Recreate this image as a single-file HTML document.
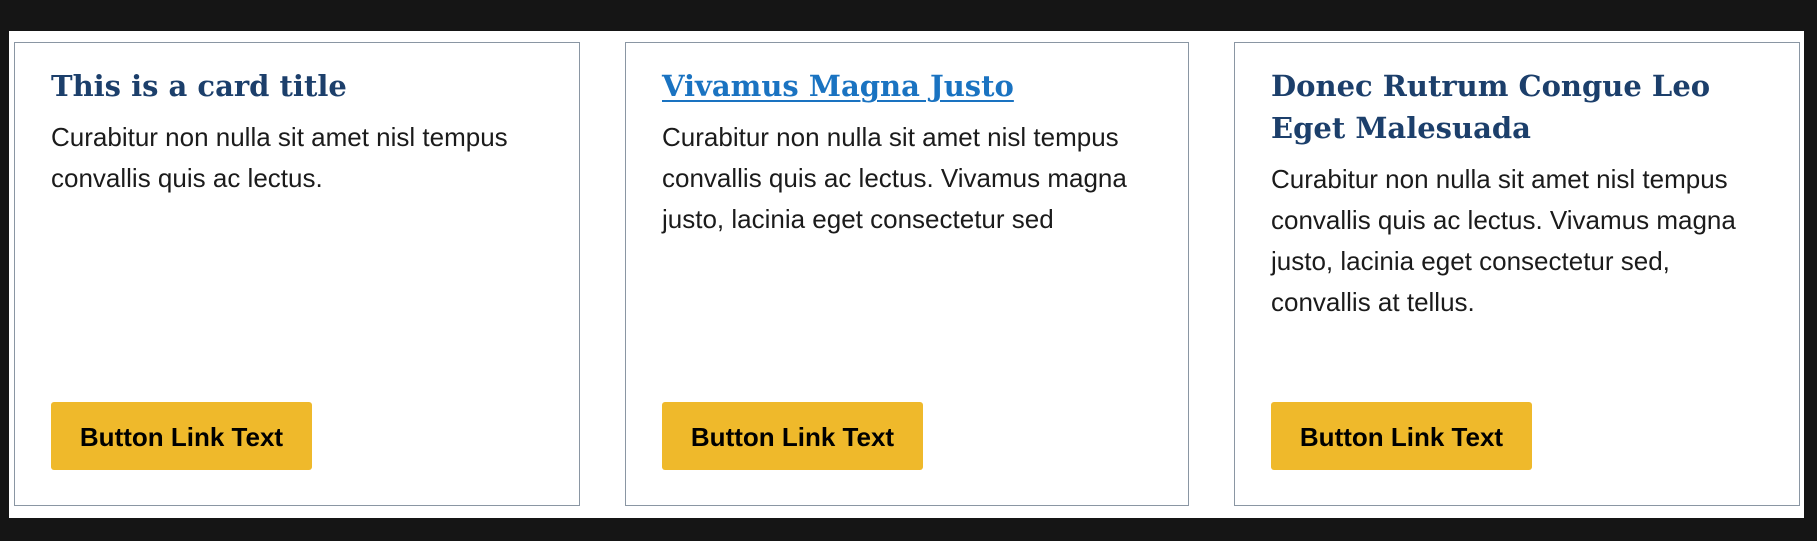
<!DOCTYPE html>
<html><head><meta charset="utf-8"><style>
html,body{margin:0;padding:0;}
body{width:1817px;height:541px;background:#151515;position:relative;overflow:hidden;font-family:"Liberation Sans",Arial,sans-serif;}
.wrap{position:absolute;left:9px;top:31px;width:1795px;height:487px;background:#fff;}
.card{position:absolute;top:42px;height:464px;border:1px solid #8a96a3;box-sizing:border-box;background:#fff;}
.in{position:absolute;left:36px;top:22px;right:45px;}
h2{margin:0;font-family:"DejaVu Serif","Liberation Serif",serif;font-weight:bold;font-size:29px;line-height:42px;color:#1c3f6b;}
h2 a{color:#1a73c1;text-decoration:underline;text-decoration-thickness:2px;text-underline-offset:4px;}
p{margin:10px 0 0;font-size:26px;line-height:41px;color:#1b1b1b;}
.btn{position:absolute;left:36px;top:359px;width:261px;height:68px;background:#efb92b;border-radius:3px;font-weight:bold;font-size:26px;line-height:70px;text-align:center;color:#000;}
</style></head><body>
<div class="wrap"></div>
<div class="card" style="left:14px;width:566px;"><div class="in">
<h2>This is a card title</h2>
<p>Curabitur non nulla sit amet nisl tempus convallis quis ac lectus.</p></div>
<div class="btn">Button Link Text</div></div>
<div class="card" style="left:625px;width:564px;"><div class="in">
<h2><a>Vivamus Magna Justo</a></h2>
<p>Curabitur non nulla sit amet nisl tempus convallis quis ac lectus. Vivamus magna justo, lacinia eget consectetur sed</p></div>
<div class="btn">Button Link Text</div></div>
<div class="card" style="left:1234px;width:566px;"><div class="in">
<h2>Donec Rutrum Congue Leo Eget Malesuada</h2>
<p>Curabitur non nulla sit amet nisl tempus convallis quis ac lectus. Vivamus magna justo, lacinia eget consectetur sed, convallis at tellus.</p></div>
<div class="btn">Button Link Text</div></div>
</body></html>
